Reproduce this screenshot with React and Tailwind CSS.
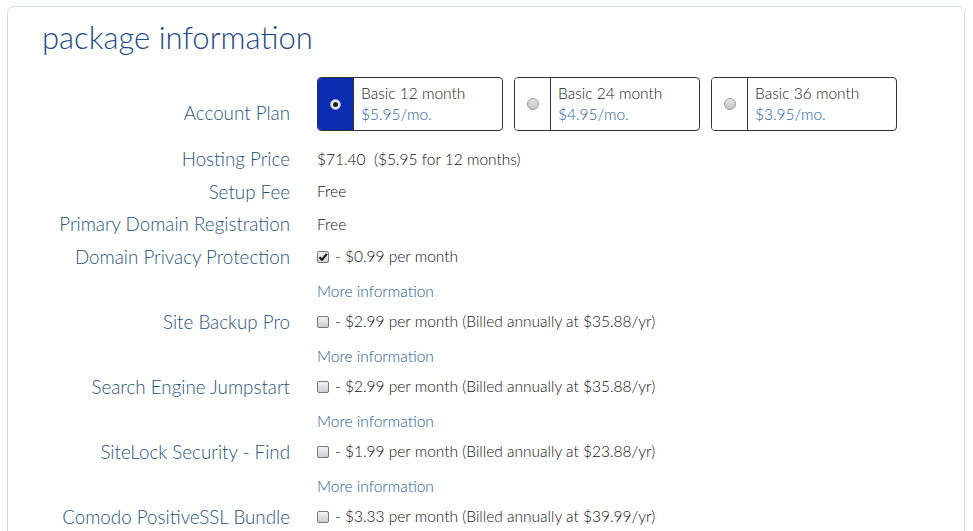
import React from 'react';

// Package information panel
const plans = [
  { name: 'Basic 12 month', price: '$5.95/mo.', selected: true },
  { name: 'Basic 24 month', price: '$4.95/mo.' },
  { name: 'Basic 36 month', price: '$3.95/mo.' },
];

const addons = [
  { label: 'Domain Privacy Protection', text: '- $0.99 per month', checked: true },
  { label: 'Site Backup Pro', text: '- $2.99 per month (Billed annually at $35.88/yr)' },
  { label: 'Search Engine Jumpstart', text: '- $2.99 per month (Billed annually at $35.88/yr)' },
  { label: 'SiteLock Security - Find', text: '- $1.99 per month (Billed annually at $23.88/yr)' },
  { label: 'Comodo PositiveSSL Bundle', text: '- $3.33 per month (Billed annually at $39.99/yr)', last: true },
];

function Radio({ on }) {
  if (on) {
    return (
      <span className="flex h-[11px] w-[11px] items-center justify-center rounded-full bg-[#e8eaf0] border border-[#9aa3c0]">
        <span className="h-[5px] w-[5px] rounded-full bg-[#222]" />
      </span>
    );
  }
  return <span className="h-[12px] w-[12px] rounded-full border border-[#9a9a9a] bg-gradient-to-b from-[#e6e6e6] to-[#c4c4c4]" />;
}

function Checkbox({ checked }) {
  return (
    <span className="flex h-[12px] w-[12px] shrink-0 items-center justify-center rounded-[2px] border border-[#777] bg-gradient-to-b from-[#f2f2f2] to-[#cfcfcf]">
      {checked && (
        <svg width="10" height="10" viewBox="0 0 10 10">
          <path d="M1.5 5.2 L4 7.8 L8.8 1.8" fill="none" stroke="#111" strokeWidth="2" />
        </svg>
      )}
    </span>
  );
}

function Row({ label, children }) {
  return (
    <div className="flex h-[32.5px] items-center">
      <div className="w-[282px] shrink-0 whitespace-nowrap text-right text-[18.8px] font-light text-[#1f5478]">{label}</div>
      <div className="ml-[27px] flex items-center whitespace-nowrap text-[15.5px] font-light text-[#111]">{children}</div>
    </div>
  );
}

export default function App() {
  return (
    <div className="min-h-screen overflow-hidden bg-white pl-[7px] pt-[6px] font-['Lato',sans-serif]">
      <div className="h-[560px] w-[958px] rounded-[7px] border border-[#dadde0]">
        <h1 className="ml-[34px] mt-[8px] text-[31px] font-light leading-[44px] text-[#1c4a86]">package information</h1>

        <div className="mt-[18px] flex h-[54px]">
          <div className="w-[282px] shrink-0 self-end pb-[4px] text-right text-[18.8px] font-light text-[#1f5478]">Account Plan</div>
          <div className="ml-[27px] flex gap-[11px]">
            {plans.map((p) => (
              <div key={p.name} className="flex h-[54px] w-[186px] overflow-hidden rounded-[4px] border border-[#333]">
                <div className={`flex w-[36px] shrink-0 items-center justify-center border-r border-[#333] ${p.selected ? 'bg-[#0a2cae]' : 'bg-white'}`}>
                  <Radio on={p.selected} />
                </div>
                <div className="flex flex-col justify-center pl-[7px] text-[15.5px] font-light leading-[21px]">
                  <span className="text-[#222]">{p.name}</span>
                  <span className="text-[#1f62a0]">{p.price}</span>
                </div>
              </div>
            ))}
          </div>
        </div>

        <div className="mt-[12px]">
          <Row label="Hosting Price">
            <span>$71.40&nbsp;&nbsp;($5.95 for 12 months)</span>
          </Row>
          <Row label="Setup Fee">Free</Row>
          <Row label="Primary Domain Registration">Free</Row>
          {addons.map((a) => (
            <React.Fragment key={a.label}>
              <Row label={a.label}>
                <Checkbox checked={a.checked} />
                <span className="ml-[6px]">{a.text}</span>
              </Row>
              {!a.last && (
                <div className="flex h-[32.5px] items-center pt-[5px]">
                  <div className="ml-[309px] text-[15.5px] font-light text-[#1d5a90]">More information</div>
                </div>
              )}
            </React.Fragment>
          ))}
        </div>
      </div>
    </div>
  );
}
